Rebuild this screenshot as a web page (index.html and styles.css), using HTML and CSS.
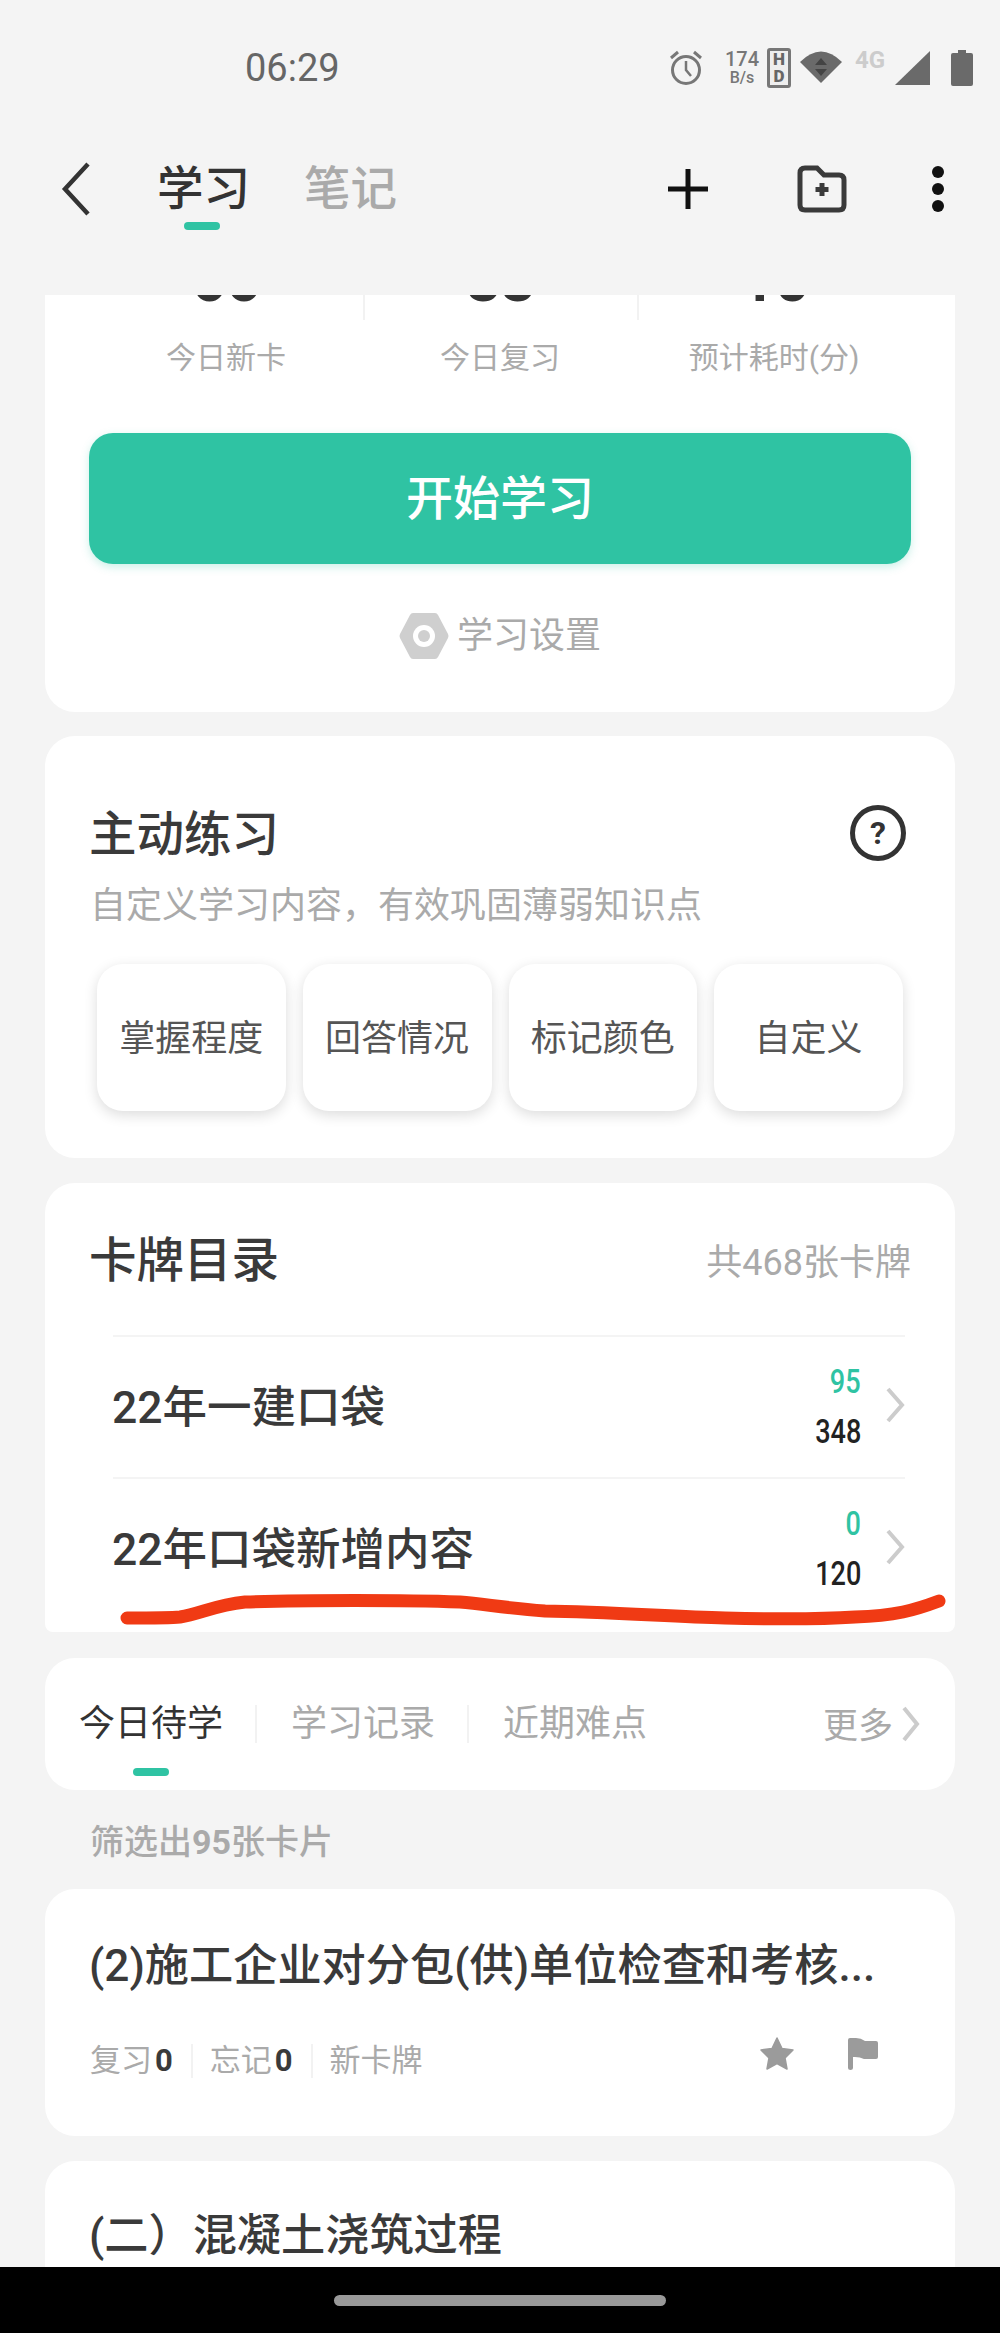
FILE: index.html
```html
<!DOCTYPE html>
<html lang="zh-CN">
<head>
    <meta charset="UTF-8">
    <title>学习</title>
    <link rel="stylesheet" href="styles.css">
</head>
<body>
    <div class="status-bar">
        <span class="time">06:29</span>
        <div class="status-icons">
            <svg class="ic-alarm" viewBox="0 0 34 36" width="34" height="36">
                <circle cx="17" cy="20" r="13.5" fill="none" stroke="#777" stroke-width="3"/>
                <path d="M17 11v9l5 6" fill="none" stroke="#777" stroke-width="2.5"/>
                <path d="M2 8l7-6M32 8l-7-6" stroke="#777" stroke-width="3"/>
            </svg>
            <div class="speed"><span>174</span><span class="speed-unit">B/s</span></div>
            <div class="hd"><span>H</span><span>D</span></div>
            <svg class="ic-wifi" viewBox="0 0 42 34" width="42" height="34">
                <path d="M0 13Q21 -8 42 13L21 34Z" fill="#6a6a6a"/>
                <path d="M21 9l6 7H15Z M21 27l-6-7h12Z" fill="#444"/>
            </svg>
            <span class="net">4G</span>
            <svg class="ic-signal" viewBox="0 0 35 34" width="35" height="34"><path d="M0 34L35 0V34Z" fill="#6a6a6a"/></svg>
            <svg class="ic-battery" viewBox="0 0 22 36" width="22" height="36"><path d="M7 0h8v3h5q2 0 2 2v29q0 2-2 2H2q-2 0-2-2V5q0-2 2-2h5Z" fill="#6a6a6a"/></svg>
        </div>
    </div>

    <div class="nav">
        <svg class="ic-back" viewBox="0 0 30 54" width="30" height="54"><path d="M27 2L4 27l23 25" fill="none" stroke="#333" stroke-width="4.5"/></svg>
        <div class="nav-tab active">学习<i class="nav-mark"></i></div>
        <div class="nav-tab">笔记</div>
        <div class="nav-actions">
            <svg viewBox="0 0 40 40" width="40" height="40"><path d="M20 0v40M0 20h40" stroke="#111" stroke-width="5"/></svg>
            <svg viewBox="0 0 50 48" width="50" height="48">
                <path d="M3 8q0-5 5-5h12l7 7h15q5 0 5 5v25q0 5-5 5H8q-5 0-5-5Z" fill="none" stroke="#3a3a3a" stroke-width="5"/>
                <path d="M25 18v13M18.500 24.500h13" stroke="#3a3a3a" stroke-width="5"/>
            </svg>
            <svg class="nav-dots" viewBox="0 0 12 46" width="12" height="46">
                <circle cx="6" cy="6" r="6" fill="#111"/><circle cx="6" cy="23" r="6" fill="#111"/><circle cx="6" cy="40" r="6" fill="#111"/>
            </svg>
        </div>
    </div>

    <div class="content">
        <div class="card card-today">
            <div class="stats">
                <div class="stat"><div class="stat-num">66</div><div class="stat-label">今日新卡</div></div>
                <div class="stat"><div class="stat-num">33</div><div class="stat-label">今日复习</div></div>
                <div class="stat"><div class="stat-num">10</div><div class="stat-label">预计耗时(分)</div></div>
            </div>
            <div class="start-btn">开始学习</div>
            <div class="settings">
                <svg viewBox="0 0 50 48" width="50" height="48">
                    <path d="M14 1h22q2 0 3 2l10 19q1 2 0 4L39 45q-1 2-3 2H14q-2 0-3-2L1 26q-1-2 0-4L11 3q1-2 3-2Z" fill="#cfcfcf"/>
                    <circle cx="25" cy="24" r="11" fill="#fff"/>
                    <circle cx="25" cy="24" r="6" fill="#cfcfcf"/>
                </svg>
                <span>学习设置</span>
            </div>
        </div>

        <div class="card card-practice">
            <div class="card-head">
                <h2>主动练习</h2>
                <svg viewBox="0 0 56 56" width="56" height="56">
                    <circle cx="28" cy="28" r="25.500" fill="none" stroke="#333" stroke-width="5"/>
                    <text x="28" y="39" text-anchor="middle" class="help-mark">?</text>
                </svg>
            </div>
            <p class="practice-sub">自定义学习内容，有效巩固薄弱知识点</p>
            <div class="chips">
                <div class="chip">掌握程度</div>
                <div class="chip">回答情况</div>
                <div class="chip">标记颜色</div>
                <div class="chip">自定义</div>
            </div>
        </div>

        <div class="card card-decks">
            <div class="card-head">
                <h2>卡牌目录</h2>
                <span class="deck-total">共468张卡牌</span>
            </div>
            <div class="deck-list">
                <div class="deck">
                    <span class="deck-name">22年一建口袋</span>
                    <div class="deck-counts"><span class="count-due">95</span><span>348</span></div>
                    <svg class="chevron" viewBox="0 0 20 36" width="20" height="36"><path d="M3 2l14 16L3 34" fill="none" stroke="#ccc" stroke-width="4"/></svg>
                </div>
                <div class="deck">
                    <span class="deck-name">22年口袋新增内容</span>
                    <div class="deck-counts"><span class="count-due">0</span><span>120</span></div>
                    <svg class="chevron" viewBox="0 0 20 36" width="20" height="36"><path d="M3 2l14 16L3 34" fill="none" stroke="#ccc" stroke-width="4"/></svg>
                </div>
            </div>
            <svg class="scribble" viewBox="0 0 910 40" width="910" height="40">
                <path d="M82 27C95 27 125 27 135 26C155 23 170 14 200 11C260 9 360 9 415 11C440 13 460 17 500 20C560 21 620 25 680 27C720 28 780 28 810 26C850 25 870 19 894 10" fill="none" stroke="#f03a14" stroke-width="13" stroke-linecap="round"/>
            </svg>
        </div>

        <div class="card card-tabs">
            <div class="tabs">
                <span class="tab tab-active">今日待学</span>
                <span class="tab">学习记录</span>
                <span class="tab tab-last">近期难点</span>
                <span class="tab-more"><span class="more-label">更多</span>
                    <svg viewBox="0 0 18 36" width="18" height="36"><path d="M2 2l13 16L2 34" fill="none" stroke="#ccc" stroke-width="4"/></svg>
                </span>
            </div>
            <i class="tab-mark"></i>
        </div>

        <div class="filter-note">筛选出<b>95</b>张卡片</div>

        <div class="card card-item">
            <div class="item-title">(2)施工企业对分包(供)单位检查和考核...</div>
            <div class="item-meta">
                <span class="meta-cell">复习<b>0</b></span>
                <span class="meta-cell">忘记<b>0</b></span>
                <span class="meta-cell meta-last">新卡牌</span>
                <svg class="ic-star" viewBox="0 0 34 33" width="34" height="33"><path d="M17 1l5 10.500 11 1.500-8 8 2 11-10-5.500L7 32l2-11-8-8 11-1.500Z" fill="#9b9b9b" stroke="#9b9b9b" stroke-linejoin="round" stroke-width="1.500"/></svg>
                <svg class="ic-flag" viewBox="0 0 30 33" width="30" height="33"><path d="M0 3q0-2 2-2h6q5 0 9 3h11q2 0 2 2v14q0 2-2 2H16q-4-2-9-2H5v11q0 2-2.500 2T0 31Z" fill="#9b9b9b"/></svg>
            </div>
        </div>

        <div class="card card-item card-cut">
            <div class="item-title">(二）混凝土浇筑过程</div>
        </div>
    </div>

    <div class="home-bar"><i class="home-pill"></i></div>
</body>
</html>
```

FILE: styles.css
```css
* {
    box-sizing: border-box;
}
html, body {
    margin: 0;
    height: 100%;
}
body {
    display: flex;
    flex-direction: column;
    height: 2333px;
    overflow: hidden;
    background-color: #f4f4f4;
    color: #3a3a3a;
    font-family: Roboto, "Noto Sans CJK SC", sans-serif;
}

/* status bar */
.status-bar {
    display: flex;
    align-items: center;
    justify-content: space-between;
    height: 136px;
    padding: 0 27px 0 245px;
    color: #666;
}
.time {
    font-size: 38px;
}
.status-icons {
    display: flex;
    align-items: center;
    gap: 0;
}
.ic-alarm {
    margin-right: 22px;
}
.speed {
    display: flex;
    flex-direction: column;
    align-items: center;
    width: 34px;
    margin-right: 8px;
    font-size: 20px;
    font-weight: 500;
    line-height: 20px;
    color: #777;
}
.speed-unit {
    font-size: 16px;
    line-height: 18px;
}
.hd {
    display: flex;
    flex-direction: column;
    align-items: center;
    width: 24px;
    height: 40px;
    margin-right: 9px;
    border: 3px solid #777;
    border-radius: 3px;
    background-color: #eee;
    color: #666;
    font-size: 17px;
    font-weight: 900;
    line-height: 17px;
}
.ic-wifi {
    margin: -4px 13px 0 0;
}
.net {
    width: 36px;
    margin-right: 4px;
    margin-top: -16px;
    color: #ccc;
    font-size: 24px;
    font-weight: 700;
}
.ic-signal {
    margin-right: 21px;
}

/* nav */
.nav {
    display: flex;
    align-items: center;
    height: 159px;
    padding: 0 0 53px 61px;
}
.ic-back {
    margin-right: 66px;
}
.nav-tab {
    position: relative;
    margin-right: 54px;
    color: #aaa;
    font-size: 46.500px;
    font-weight: 500;
    line-height: 60px;
}
.nav-tab.active {
    color: #333;
}
.nav-mark {
    position: absolute;
    left: 27px;
    bottom: -11px;
    width: 36px;
    height: 8px;
    border-radius: 4px;
    background-color: #2fc3a3;
}
.nav-actions {
    display: flex;
    align-items: center;
    margin-left: auto;
    padding-right: 56px;
    gap: 89px;
}
.nav-dots {
    margin-left: -4px;
}

/* page */
.content {
    flex: 1;
    min-height: 0;
    overflow: hidden;
    padding: 0 45px;
}
.card {
    margin-bottom: 25px;
    border-radius: 30px;
    background-color: #fff;
}
.card-head {
    display: flex;
    align-items: center;
    justify-content: space-between;
    height: 60px;
}
.card-head h2 {
    margin: 0;
    padding-bottom: 6px;
    font-size: 47.500px;
    font-weight: 500;
}

/* today card */
.card-today {
    margin-top: -55px;
    margin-bottom: 24px;
    padding: 0 44px 52px;
}
.stats {
    display: grid;
    grid-template-columns: repeat(3, 1fr);
}
.stat {
    text-align: center;
}
.stat-num {
    height: 80px;
    color: #333;
    font-size: 60px;
    font-weight: 700;
    line-height: 82px;
}
.stat + .stat .stat-num {
    border-left: 2px solid #f2f2f2;
}
.stat-label {
    margin-top: 18px;
    color: #aaa;
    font-size: 30px;
    line-height: 40px;
}
.start-btn {
    height: 131px;
    margin-top: 55px;
    border-radius: 24px;
    background-color: #2fc3a3;
    box-shadow: 0 3px 8px rgba(47, 195, 163, 0.25);
    color: #fff;
    font-size: 47px;
    font-weight: 500;
    line-height: 131px;
    text-align: center;
}
.settings {
    display: flex;
    align-items: center;
    justify-content: center;
    gap: 8px;
    height: 48px;
    margin-top: 48px;
    color: #aaa;
    font-size: 36px;
    line-height: 50px;
}

/* practice card */
.card-practice {
    height: 422px;
    padding: 67px 44px 47px;
}
.card-practice svg {
    margin-right: 5px;
}
.help-mark {
    fill: #333;
    font-family: Roboto, sans-serif;
    font-size: 32px;
    font-weight: 700;
}
.practice-sub {
    margin: 21px 0 0;
    padding-left: 1px;
    color: #aaa;
    font-size: 36px;
    line-height: 44px;
}
.chips {
    display: grid;
    grid-template-columns: repeat(4, 1fr);
    gap: 17px;
    margin-top: 36px;
    padding: 0 8px;
}
.chip {
    height: 147px;
    border-radius: 26px;
    background-color: #fff;
    box-shadow: 0 4px 14px rgba(0, 0, 0, 0.14);
    color: #555;
    font-size: 36px;
    line-height: 150px;
    text-align: center;
}

/* deck card */
.card-decks {
    position: relative;
    height: 449px;
    margin-bottom: 26px;
    padding: 46px 44px 0;
    border-radius: 30px 30px 8px 8px;
}
.deck-total {
    color: #aaa;
    font-size: 36px;
}
.deck-list {
    margin: 46px 6px 0 24px;
}
.deck {
    display: flex;
    align-items: center;
    height: 142px;
    border-top: 2px solid #f4f4f4;
}
.deck-name {
    padding-bottom: 7px;
    margin-left: -1px;
    font-size: 44.500px;
    font-weight: 500;
}
.deck-counts {
    display: flex;
    flex-direction: column;
    align-items: flex-end;
    width: 100px;
    margin-left: auto;
    color: #222;
    font-size: 33px;
    font-weight: 500;
    line-height: 50px;
}
/* digits in the capture are squeezed sideways */
.deck-counts span {
    transform: scaleX(0.82);
    transform-origin: right center;
}
.count-due {
    color: #2fc3a3;
}
.chevron {
    margin: -4px 0 0 24px;
}
.scribble {
    position: absolute;
    left: 0;
    top: 408px;
}

/* tabs card */
.card-tabs {
    height: 132px;
    margin-bottom: 30px;
    padding: 44px 35px 0 34px;
}
.tabs {
    display: flex;
    align-items: center;
    height: 44px;
    font-size: 36px;
}
.tab {
    margin-right: 34px;
    padding-right: 32px;
    border-right: 2px solid #f2f2f2;
    color: #aaa;
    line-height: 38px;
}
.tab-active {
    color: #333;
}
.tab-last {
    border-right: 0;
}
.tab-more {
    display: flex;
    align-items: center;
    gap: 9px;
    margin-left: auto;
    color: #aaa;
}
.more-label {
    padding-bottom: 3px;
    font-size: 35px;
}
.tab-mark {
    display: block;
    width: 36px;
    height: 8px;
    margin: 22px 0 0 54px;
    border-radius: 4px;
    background-color: #2fc3a3;
}

/* list */
.filter-note {
    margin-bottom: 25px;
    padding-left: 45px;
    color: #aaa;
    font-size: 34px;
    font-weight: 500;
    line-height: 44px;
}
.card-item {
    height: 247px;
    margin-bottom: 25px;
    padding: 47px 45px 0;
}
.item-title {
    margin-left: -1px;
    font-size: 44.200px;
    font-weight: 500;
    line-height: 60px;
    white-space: nowrap;
}
.item-meta {
    display: flex;
    align-items: center;
    height: 40px;
    margin-top: 45px;
    padding-right: 32px;
    color: #aaa;
    font-size: 31px;
}
.item-meta b {
    margin-left: 3px;
    color: #3a3a3a;
    font-weight: 700;
}
.meta-cell {
    margin-right: 17px;
    padding-right: 18px;
    border-right: 2px solid #f2f2f2;
    line-height: 34px;
}
.meta-last {
    border-right: 0;
}
.ic-star {
    margin: -16px 0 0 auto;
}
.ic-flag {
    margin: -16px 0 0 54px;
}
.card-cut {
    padding-top: 45px;
}

/* bottom bar */
.home-bar {
    display: flex;
    align-items: center;
    justify-content: center;
    height: 66px;
    background-color: #000;
}
.home-pill {
    width: 332px;
    height: 11px;
    border-radius: 6px;
    background-color: #999;
}
```
